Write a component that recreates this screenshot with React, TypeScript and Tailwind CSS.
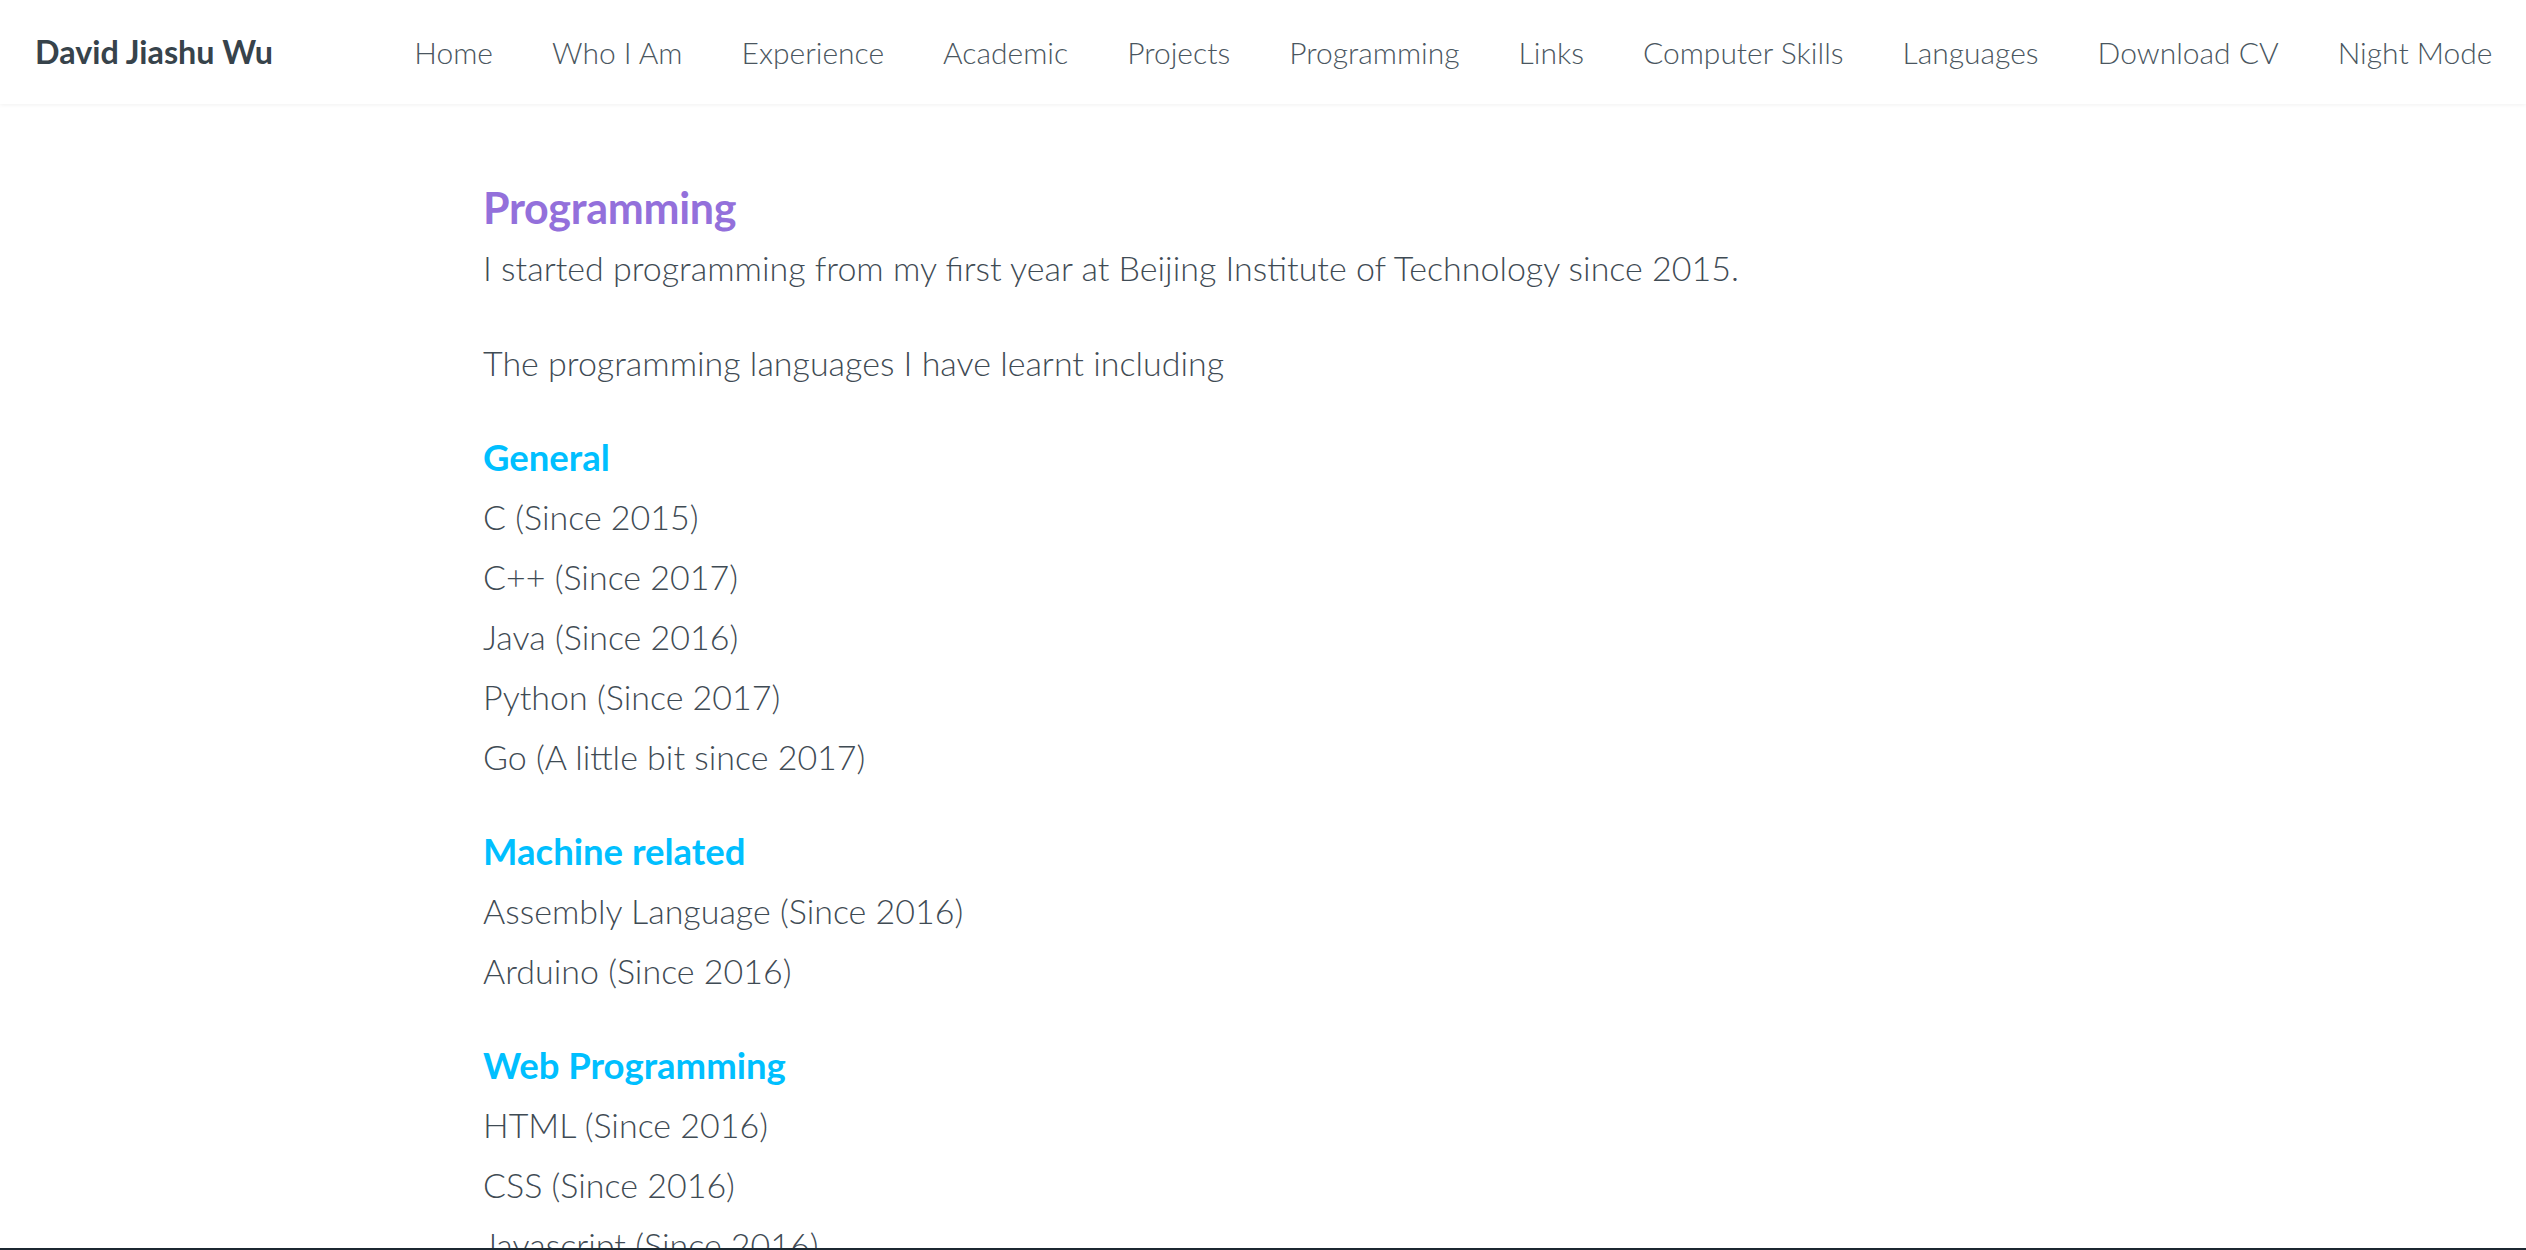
import React from "react";

const navItems = [
  "Home",
  "Who I Am",
  "Experience",
  "Academic",
  "Projects",
  "Programming",
  "Links",
  "Computer Skills",
  "Languages",
  "Download CV",
  "Night Mode",
];

const groups: { title: string; items: string[] }[] = [
  {
    title: "General",
    items: [
      "C (Since 2015)",
      "C++ (Since 2017)",
      "Java (Since 2016)",
      "Python (Since 2017)",
      "Go (A little bit since 2017)",
    ],
  },
  {
    title: "Machine related",
    items: ["Assembly Language (Since 2016)", "Arduino (Since 2016)"],
  },
  {
    title: "Web Programming",
    items: ["HTML (Since 2016)", "CSS (Since 2016)", "Javascript (Since 2016)"],
  },
];

export default function App() {
  return (
    <div
      className="min-h-screen bg-white text-[#3f4b54]"
      style={{ fontFamily: "Lato, 'Open Sans', sans-serif" }}
    >
      <nav className="flex h-[104px] items-center justify-between bg-white pl-[35px] pr-[4px] shadow-[0_1px_4px_rgba(0,0,0,0.06)]">
        <div className="text-[32.3px] font-bold text-[#37434b]">
          David Jiashu Wu
        </div>
        <ul className="flex items-center">
          {navItems.map((n) => (
            <li
              key={n}
              className="px-[29.5px] text-[30px] font-light text-[#4a5660]"
            >
              {n}
            </li>
          ))}
        </ul>
      </nav>

      <main className="pl-[483px] pt-[74px] pb-[40px]">
        <h2 className="text-[43px] font-bold leading-[60px] tracking-[-0.3px] text-[#9370db]">
          Programming
        </h2>
        <p className="text-[34px] font-light leading-[60px]">
          I started programming from my first year at Beijing Institute of
          Technology since 2015.
        </p>
        <p className="mt-[35px] text-[34px] font-light leading-[60px]">
          The programming languages I have learnt including
        </p>
        {groups.map((g) => (
          <section key={g.title} className="mt-[34px]">
            <h3 className="text-[36.5px] font-bold leading-[60px] text-[#00bfff]">
              {g.title}
            </h3>
            {g.items.map((it) => (
              <div key={it} className="text-[34px] font-light leading-[60px]">
                {it}
              </div>
            ))}
          </section>
        ))}
      </main>

      <div className="fixed bottom-0 left-0 right-0 h-[2px] bg-[#1c2831]" />
    </div>
  );
}
